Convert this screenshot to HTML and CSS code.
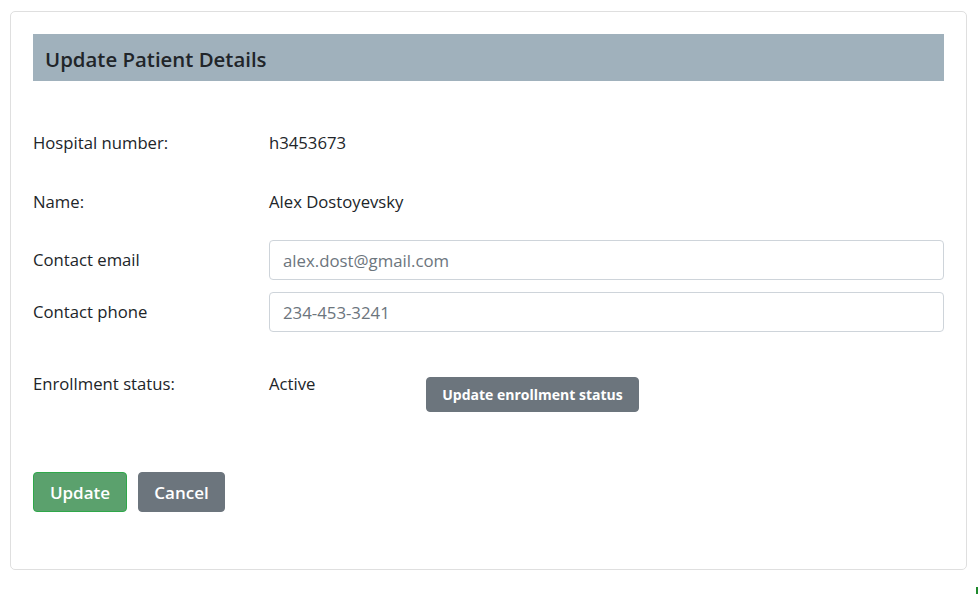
FILE: index.html
```html
<!DOCTYPE html>
<html lang="en">
<head>
<meta charset="utf-8">
<title>Update Patient Details</title>
<link rel="stylesheet" href="styles.css">
</head>
<body>
<div class="card">
  <div class="card-header">Update Patient Details</div>
  <div class="row row-hospital">
    <div class="label">Hospital number:</div>
    <div class="value">h3453673</div>
  </div>
  <div class="row row-name">
    <div class="label">Name:</div>
    <div class="value">Alex Dostoyevsky</div>
  </div>
  <div class="row row-input row-email">
    <label class="label" for="email">Contact email</label>
    <input class="input" id="email" type="text" placeholder="alex.dost@gmail.com">
  </div>
  <div class="row row-input row-phone">
    <label class="label" for="phone">Contact phone</label>
    <input class="input" id="phone" type="text" placeholder="234-453-3241">
  </div>
  <div class="row row-status">
    <div class="label">Enrollment status:</div>
    <div class="value status-value">Active</div>
    <div class="status-action"><button class="btn btn-small" type="button">Update enrollment status</button></div>
  </div>
  <div class="actions">
    <button class="btn btn-success" type="button">Update</button>
    <button class="btn btn-secondary" type="button">Cancel</button>
  </div>
</div>
<span class="corner-mark"></span>
</body>
</html>
```
FILE: styles.css
```css
html, body {
  margin: 0;
  padding: 0;
  background: #ffffff;
}
body {
  padding: 11px 12px 0 10px;
  font-family: "Open Sans", "Noto Sans", "Liberation Sans", sans-serif;
  font-size: 16.7px;
  line-height: 24px;
  color: #212529;
}
.card {
  box-sizing: border-box;
  width: 957px;
  height: 559px;
  border: 1px solid #dfdfdf;
  border-radius: 5px;
  padding: 22px;
}
.card-header {
  box-sizing: border-box;
  height: 47px;
  background: #a0b1bc;
  padding: 3px 0 0 12px;
  font-size: 20.4px;
  font-weight: 600;
  line-height: 44px;
  color: #212529;
}
.row {
  display: grid;
  grid-template-columns: 236px 157px 1fr;
  align-items: center;
}
.row-input {
  grid-template-columns: 236px 1fr;
}
.row-hospital { margin-top: 50px; }
.row-name { margin-top: 35px; }
.row-email { margin-top: 26px; }
.row-phone { margin-top: 12px; }
.row-status { margin-top: 40px; align-items: start; }
.label, .value { display: block; }
.input {
  box-sizing: border-box;
  height: 40px;
  width: 100%;
  border: 1px solid #ced4da;
  border-radius: 4px;
  padding: 0 13px;
  font-family: inherit;
  font-size: 16.8px;
  color: #495057;
  background: #fff;
}
.input::placeholder {
  color: #6c757d;
  opacity: 1;
}
.status-action { padding-top: 5px; }
.btn {
  font-family: inherit;
  border: 1px solid transparent;
  border-radius: 4px;
  color: #fff;
  cursor: pointer;
}
.btn-small {
  height: 35px;
  width: 213px;
  background: #6c757d;
  border-color: #6c757d;
  font-size: 14px;
  font-weight: 700;
  padding: 0;
}
.actions {
  display: flex;
  gap: 11px;
  margin-top: 60px;
}
.btn-success {
  height: 40px;
  width: 94px;
  background: #5ba16d;
  border-color: #2fa84a;
  font-size: 17px;
  font-weight: 600;
  padding: 0;
}
.btn-secondary {
  height: 40px;
  width: 87px;
  background: #6c757d;
  border-color: #6c757d;
  font-size: 17px;
  font-weight: 600;
  padding: 0;
}
.corner-mark {
  position: fixed;
  right: 1px;
  bottom: 0;
  width: 2px;
  height: 7px;
  background: #1f8a2d;
}
```
